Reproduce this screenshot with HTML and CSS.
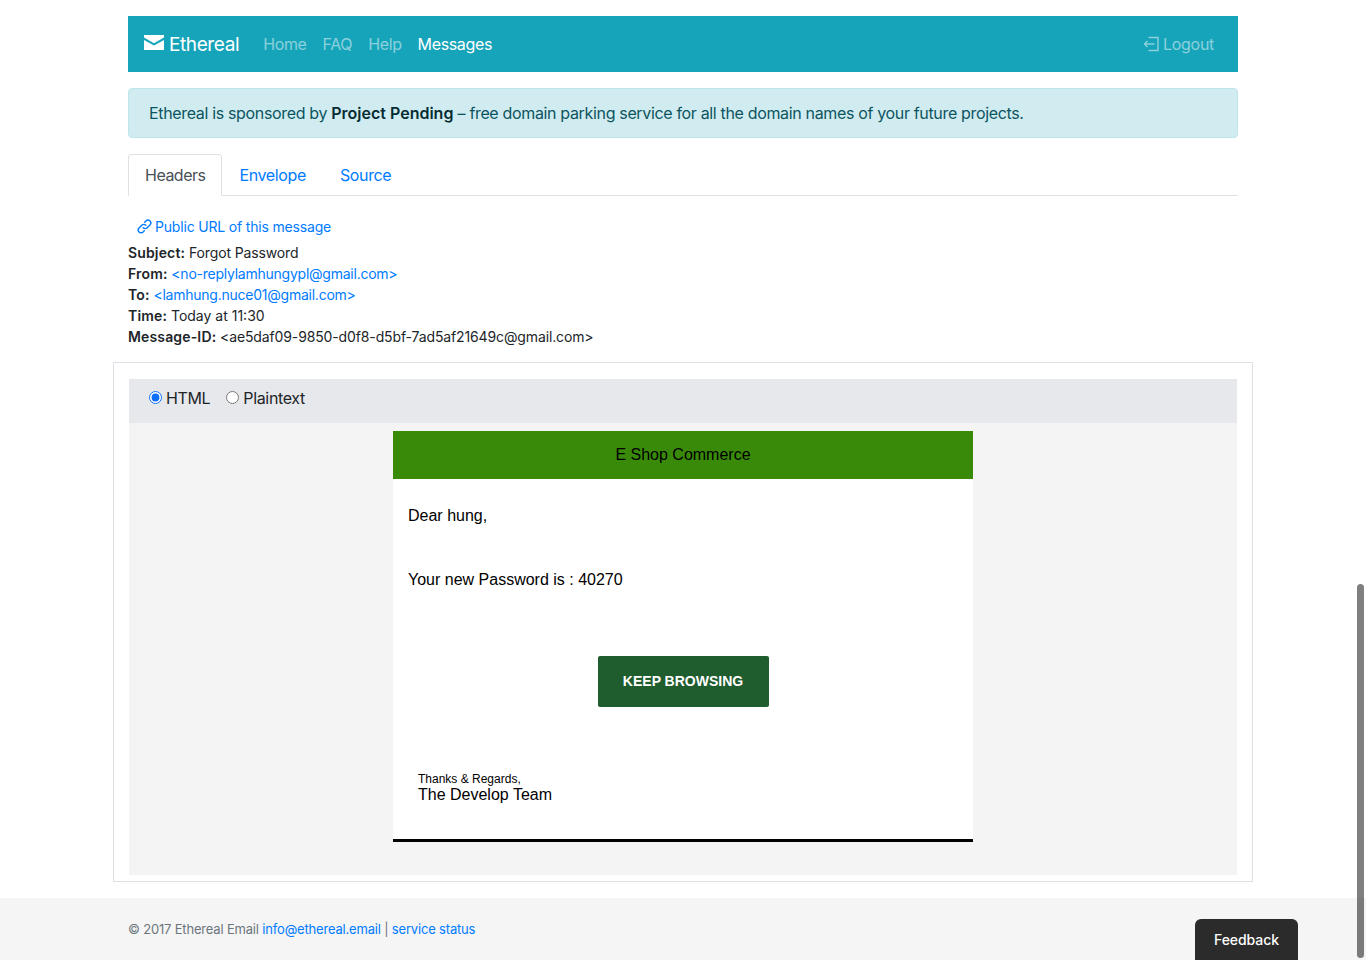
FILE: index.html
```html
<!doctype html>
<html lang="en">
  <head>
    <meta charset="UTF-8" />
    <title>Ethereal Email – Messages</title>
    <link rel="stylesheet" href="styles.css">
  </head>
  <body>
    <div class="container">
      <nav class="navbar">
        <a class="brand" href="#">
          <svg class="brand-icon" viewBox="0 0 20 15" width="20" height="15" aria-hidden="true">
            <path d="M0 0h20v2.6l-10 5.6L0 2.6z" />
            <path d="M0 5l10 5.6L20 5v10H0z" />
          </svg>
          Ethereal
        </a>
        <ul class="nav-links">
          <li><a href="#">Home</a></li>
          <li><a href="#">FAQ</a></li>
          <li><a href="#">Help</a></li>
          <li><a class="active" href="#">Messages</a></li>
        </ul>
        <a class="logout" href="#">
          <svg viewBox="0 0 16 16" width="16" height="16" fill="none" stroke="currentColor" stroke-width="1.4" aria-hidden="true">
            <path d="M5.5 1.5h9.5v13H5.5" />
            <path d="M11.5 8H1.5M4.5 5l-3 3 3 3" />
          </svg>
          Logout
        </a>
      </nav>

      <div class="alert">
        Ethereal is sponsored by <strong>Project Pending</strong> – free domain parking service for all the domain names of your future projects.
      </div>

      <ul class="tabs">
        <li><a class="tab active" href="#">Headers</a></li>
        <li><a class="tab" href="#">Envelope</a></li>
        <li><a class="tab" href="#">Source</a></li>
      </ul>

      <div class="headers">
        <a class="public-url" href="#">
          <svg viewBox="0 0 16 16" width="15" height="15" fill="none" stroke="currentColor" stroke-width="1.5" stroke-linecap="round" aria-hidden="true">
            <path d="M6.6 9.4a3 3 0 0 0 4.3 0l2.9-2.9a3 3 0 0 0-4.3-4.3L8.2 3.5" />
            <path d="M9.4 6.6a3 3 0 0 0-4.3 0L2.2 9.5a3 3 0 0 0 4.3 4.3l1.3-1.3" />
          </svg>
          Public URL of this message
        </a>
        <div><strong>Subject:</strong> Forgot Password</div>
        <div><strong>From:</strong> <a href="#">&lt;no-replylamhungypl@gmail.com&gt;</a></div>
        <div><strong>To:</strong> <a href="#">&lt;lamhung.nuce01@gmail.com&gt;</a></div>
        <div class="time"><strong>Time:</strong> Today at 11:30</div>
        <div><strong>Message-ID:</strong> &lt;ae5daf09-9850-d0f8-d5bf-7ad5af21649c@gmail.com&gt;</div>
      </div>
    </div>

    <div class="message-wrap">
      <div class="message-box">
        <div class="view-bar">
          <label class="radio"><input type="radio" name="view" checked /> HTML</label>
          <label class="radio"><input type="radio" name="view" /> Plaintext</label>
        </div>
        <div class="message-body">
          <div class="email">
            <div class="email-head">E Shop Commerce</div>
            <div class="email-main">
              <p class="dear">Dear hung,</p>
              <p class="password">Your new Password is : 40270</p>
              <div class="cta-row"><a class="cta" href="#">KEEP BROWSING</a></div>
              <div class="thanks">Thanks &amp; Regards,</div>
              <div class="team">The Develop Team</div>
            </div>
          </div>
        </div>
      </div>
    </div>

    <footer class="footer">
      <div class="footer-inner">
        © 2017 Ethereal Email <a href="#">info@ethereal.email</a> | <a href="#">service status</a>
      </div>
    </footer>

    <button class="feedback">Feedback</button>
    <div class="scroll-thumb"></div>
  </body>
</html>
```

FILE: styles.css
```css
:root {
  --blue: #007bff;
  --border: #dee2e6;
  --teal: #16a4ba;
}

* {
  box-sizing: border-box;
}

html,
body {
  height: 960px;
  overflow: hidden;
}

body {
  margin: 0;
  font-family: Inter, "Liberation Sans", sans-serif;
  font-size: 16px;
  line-height: 24px;
  letter-spacing: -0.3px;
  color: #212529;
  background: #fff;
}

a {
  color: var(--blue);
  text-decoration: none;
}

strong {
  font-weight: 600;
}

.container {
  width: 1110px;
  margin: 0 auto;
  padding-top: 16px;
}

.navbar {
  display: flex;
  align-items: center;
  height: 56px;
  padding: 0 24px 0 16px;
  background: var(--teal);
}

.brand {
  display: flex;
  align-items: center;
  gap: 5px;
  margin-right: 24px;
  padding-top: 1px;
  font-size: 19px;
  letter-spacing: -0.4px;
  color: #fff;
}

.brand-icon {
  fill: #fff;
  margin-top: -5px;
}

.nav-links {
  display: flex;
  gap: 16px;
  margin: 0;
  padding: 0;
  list-style: none;
  letter-spacing: -0.36px;
}

.nav-links a,
.logout {
  color: rgba(255, 255, 255, 0.5);
}

.nav-links a.active {
  color: #fff;
}

.logout {
  display: flex;
  align-items: center;
  gap: 4px;
  margin-left: auto;
}

.alert {
  margin-top: 16px;
  padding: 12px 20px;
  border: 1px solid #bee5eb;
  border-radius: 4px;
  letter-spacing: -0.34px;
  color: #0c5460;
  background: #d1ecf1;
}

.alert strong {
  letter-spacing: 0;
  color: #062c33;
}

.tabs {
  display: flex;
  margin: 16px 0 0;
  padding: 0;
  list-style: none;
  border-bottom: 1px solid var(--border);
  letter-spacing: -0.37px;
}

.tab {
  display: block;
  margin-bottom: -1px;
  padding: 8px 16px;
  border: 1px solid transparent;
  border-radius: 4px 4px 0 0;
}

.tab.active {
  letter-spacing: -0.5px;
  color: #495057;
  background: #fff;
  border-color: var(--border) var(--border) #fff;
}

.headers {
  margin-top: 20px;
  font-size: 14px;
  line-height: 21px;
  letter-spacing: -0.13px;
}

.headers strong {
  letter-spacing: 0.15px;
}

.headers a {
  letter-spacing: -0.24px;
}

.headers .time {
  letter-spacing: 0;
}

.headers .public-url {
  display: flex;
  align-items: center;
  gap: 3px;
  margin-bottom: 5px;
  padding-left: 9px;
  letter-spacing: -0.18px;
}

.message-wrap {
  width: 1140px;
  margin: 15px auto 0;
}

.message-box {
  height: 520px;
  padding: 16px 15px 5px;
  border: 1px solid var(--border);
}

.view-bar {
  display: flex;
  gap: 16px;
  height: 44px;
  align-items: center;
  padding: 0 0 6px 20px;
  letter-spacing: -0.35px;
  background: #e7e8eb;
}

.radio {
  display: flex;
  align-items: center;
  gap: 4px;
}

.radio input {
  margin: 0 0 2px;
  accent-color: #0b6efd;
}

.message-body {
  height: 452px;
  padding-top: 8px;
  background: #f4f4f4;
}

.email {
  width: 580px;
  margin-left: 264px;
  font-family: "Liberation Sans", Arial, sans-serif;
  letter-spacing: 0;
  color: #000;
  background: #fff;
  border-bottom: 3px solid #000;
}

.email-head {
  height: 48px;
  line-height: 47px;
  text-align: center;
  background: #3a8a0a;
}

.email-main {
  height: 360px;
  padding: 25px 15px 0;
}

.email-main p {
  margin: 0;
}

.password {
  padding-top: 40px;
}

.cta-row {
  display: flex;
  justify-content: center;
  padding-top: 64px;
}

.cta {
  display: block;
  width: 171px;
  height: 51px;
  border-radius: 2px;
  font-size: 14px;
  font-weight: 700;
  line-height: 50px;
  text-align: center;
  color: #fff;
  background: #1f5c2e;
}

.thanks {
  margin-top: 64px;
  padding-left: 10px;
  font-size: 12px;
  line-height: 17px;
}

.team {
  padding-left: 10px;
  line-height: 14px;
}

.footer {
  height: 62px;
  margin-top: 16px;
  background: #f5f5f5;
}

.footer-inner {
  width: 1110px;
  margin: 0 auto;
  padding-top: 21px;
  font-size: 13px;
  line-height: 20px;
  letter-spacing: -0.18px;
  color: #6c757d;
}

.feedback {
  position: fixed;
  left: 1195px;
  top: 919px;
  width: 103px;
  height: 45px;
  padding: 0 0 4px;
  border: none;
  border-radius: 6px 6px 0 0;
  font-family: Inter, sans-serif;
  font-size: 14px;
  font-weight: 500;
  letter-spacing: -0.05px;
  color: #fff;
  background: #2b2b2b;
}

.scroll-thumb {
  position: fixed;
  left: 1357px;
  top: 584px;
  width: 7px;
  height: 374px;
  border-radius: 4px;
  background: rgba(0, 0, 0, 0.5);
}
```
